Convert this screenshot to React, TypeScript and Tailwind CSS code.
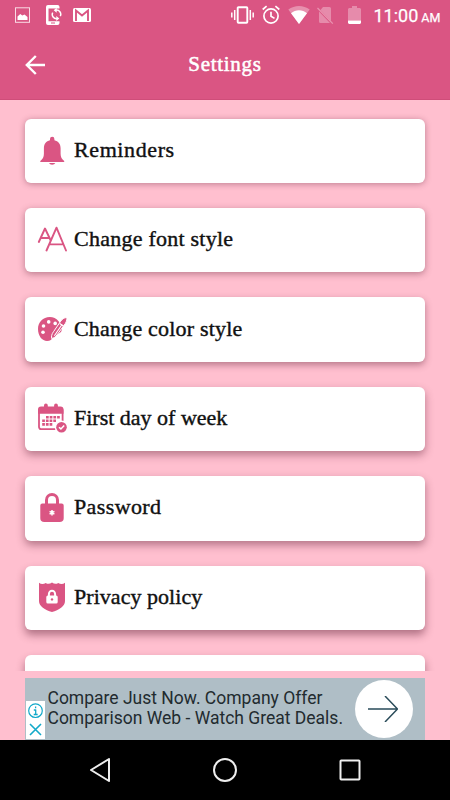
import React from "react";

const PINK = "#da5583";

const BellIcon = () => (
  <svg viewBox="0 0 30 32" className="h-8 w-[30px]" fill={PINK}>
    <path d="M13 4a2.200 2.200 0 0 1 4.400 0v1.300c3.900 1 6.200 3.800 6.200 7.900v5.500c0 3.300 1.200 5.500 3.600 7.300v1H3.300v-1c2.400-1.800 3.600-4 3.600-7.300v-5.500c0-4.100 2.200-6.900 6.100-7.900z" />
    <path d="M12 28h6.300a3.300 2.400 0 0 1-6.300 0z" />
  </svg>
);

const FontIcon = () => (
  <svg viewBox="0 0 30 32" className="h-8 w-[30px]" fill="none" stroke={PINK} strokeWidth="1.900" strokeLinecap="round" strokeLinejoin="round">
    <path d="M1.800 18L8 4.500 13.500 16M4.200 14h8" />
    <path d="M9.500 26.500L19.500 3.700 29 26.500M12.600 20.400h13.700" />
  </svg>
);

const PaletteIcon = () => (
  <svg viewBox="0 0 30 32" className="h-8 w-[30px]">
    <path fill={PINK} d="M12.800 3C6 3 1 8.200 1 15c0 7 4.200 12 9 12 3.400 0 4.800-1.600 5.500-3.200l8.500-5.900c1.900-3 .7-7.200-2-10.100C19.500 4.400 16 3 12.800 3z" />
    <g fill="#fff">
      <circle cx="11.700" cy="7.900" r="1.800" />
      <circle cx="18.200" cy="9.400" r="1.800" />
      <circle cx="6.500" cy="12" r="1.800" />
      <circle cx="6" cy="18.300" r="1.800" />
    </g>
    <path d="M30 3.500c-3 0-5 1.800-6.300 3.700l-7.200 10.500c-2 2.500-2.200 5-1.800 6.800 2-.5 4.200-1.500 5.200-3.500l7-9.500c2-2.500 3-4.500 3.100-8z" fill={PINK} stroke="#fff" strokeWidth="1" />
    <path d="M22.700 9.500l4 2.700M25.200 10.200l-7.800 11.500" stroke="#fff" strokeWidth="1.100" />
  </svg>
);

const CalendarIcon = () => (
  <svg viewBox="0 0 30 32" className="h-8 w-[30px]">
    <rect x="2" y="5.500" width="23.600" height="20.600" rx="2" fill="none" stroke={PINK} strokeWidth="1.800" />
    <path fill={PINK} d="M1 10.800V6.500a3 3 0 0 1 3-3h19.500a3 3 0 0 1 3 3v4.300z" />
    <path d="M8.900 2.500v2M19 2.500v2" stroke={PINK} strokeWidth="3.800" strokeLinecap="round" />
    <path d="M9 14.200h14.500M5.200 17.800h14.500M5.200 21.400h10.500" stroke={PINK} strokeWidth="2.600" strokeDasharray="2.700 1" />
    <circle cx="24.500" cy="24.200" r="6.700" fill="#fff" />
    <circle cx="24.500" cy="24.200" r="5.300" fill={PINK} />
    <path d="M22 24.200l1.900 1.700 3.300-3.500" fill="none" stroke="#fff" strokeWidth="1.500" />
  </svg>
);

const PasswordIcon = () => (
  <svg viewBox="0 0 30 32" className="h-8 w-[30px]">
    <path d="M9.500 12.500V8a5.500 5.500 0 0 1 11 0v4.500" fill="none" stroke={PINK} strokeWidth="3" />
    <path fill={PINK} d="M5.300 11.500h19.400a2 2 0 0 1 2 2v12.700c0 2.500-1.500 3.800-4 3.800H7.300c-2.500 0-4-1.300-4-3.800V13.500a2 2 0 0 1 2-2z" />
    <path d="M15 18v5.600M12.600 19.400l4.800 2.800M17.400 19.400l-4.800 2.800" stroke="#fff" strokeWidth="1.500" />
  </svg>
);

const ShieldIcon = () => (
  <svg viewBox="0 0 30 32" className="h-8 w-[30px]">
    <path fill={PINK} d="M2 .8c2 1.600 4.500 1.700 6.800.1 2 1.400 4.200 1 6.200-.5 2 1.500 4.200 1.900 6.200.5 2.300 1.600 4.800 1.500 6.800-.1V19c0 5.500-6 9-13 11C8 28 2 24.500 2 19z" />
    <path d="M11.900 15v-3a3.100 3.300 0 0 1 6.200 0v3" fill="none" stroke="#fff" strokeWidth="2" />
    <rect x="9.300" y="13.500" width="11.400" height="7.900" rx="1.500" fill="#fff" />
    <circle cx="15" cy="17.400" r="1.200" fill={PINK} />
  </svg>
);

const items = [
  { label: "Reminders", icon: <BellIcon />, spacing: "tracking-[0.6px]", shadow: "shadow-[0_1px_6px_rgba(90,30,50,0.4)]" },
  { label: "Change font style", icon: <FontIcon />, spacing: "tracking-[0.24px]", shadow: "shadow-[0_2px_7px_rgba(90,30,50,0.42)]" },
  { label: "Change color style", icon: <PaletteIcon />, spacing: "tracking-[0.2px]", shadow: "shadow-[0_3px_7px_rgba(90,30,50,0.43)]" },
  { label: "First day of week", icon: <CalendarIcon />, spacing: "tracking-[0px]", shadow: "shadow-[0_4px_8px_rgba(90,30,50,0.44)]" },
  { label: "Password", icon: <PasswordIcon />, spacing: "tracking-[0.38px]", shadow: "shadow-[0_4px_9px_rgba(90,30,50,0.46)]" },
  { label: "Privacy policy", icon: <ShieldIcon />, spacing: "tracking-[0.04px]", shadow: "shadow-[0_5px_9px_rgba(90,30,50,0.48)]" },
];

function StatusBar() {
  return (
    <div className="flex h-[30px] items-start pl-[15px] pt-[5px] text-white">
      <svg width="15" height="20" viewBox="0 0 15 20" className="shrink-0">
        <rect x=".5" y="2.800" width="14" height="14.500" fill="none" stroke="#f9dbe5" />
        <path d="M2.500 15v-3.500L5.300 9l2 1.500 2.200-1 3 2.500v3z" fill="#fff" />
      </svg>
      <svg width="16" height="20" viewBox="0 0 16 20" className="ml-4 shrink-0">
        <path fill="#fff" d="M2 0h9.500a2 2 0 0 1 2 2v1.500H2.500v12.800h11V18a2 2 0 0 1-2 2H2a2 2 0 0 1-2-2V2a2 2 0 0 1 2-2z" />
        <path d="M9.800 5.200a4.200 4.200 0 0 1 4.500 6M11.200 13.600a4.200 4.200 0 0 1-4.500-6" fill="none" stroke="#fff" strokeWidth="1.500" />
        <path d="M10.700 2.700v5l-3-2.500zM10.300 11.100v5l3-2.500z" fill="#fff" />
        <path d="M5 18h4" stroke={PINK} />
      </svg>
      <svg width="18" height="20" viewBox="0 0 18 20" className="ml-[11px] shrink-0">
        <rect y="3" width="18" height="14" rx="1.500" fill="#fff" />
        <path d="M3 16V5.500l6 5 6-5V16" fill="none" stroke={PINK} strokeWidth="1.900" />
      </svg>
      <svg width="23" height="20" viewBox="0 0 23 20" className="ml-[140px] shrink-0" fill="none" stroke="#fff">
        <rect x="6.700" y="2.200" width="9.600" height="15.600" rx=".8" strokeWidth="1.900" />
        <path d="M3.700 5v10M19.300 5v10M.8 7.500v5M22.200 7.500v5" strokeWidth="1.500" />
      </svg>
      <svg width="18" height="20" viewBox="0 0 18 20" className="ml-2 shrink-0" fill="none" stroke="#fff" strokeWidth="1.700">
        <circle cx="9" cy="11" r="7.100" />
        <path d="M9 6.700v4.500l3.500 2.200M.7 4.500l3.900-3.300M17.300 4.500l-3.900-3.300" />
      </svg>
      <svg width="22" height="20" viewBox="0 0 22 20" className="ml-[8px] shrink-0">
        <path d="M11 19L.3 4.600C6.500-.3 15.500-.3 21.700 4.600z" fill="#fff" opacity=".35" />
        <path d="M11 19L3 8.300c4.500-4 11.500-4 16 0z" fill="#fff" />
      </svg>
      <svg width="17" height="20" viewBox="0 0 17 20" className="ml-[7px] shrink-0">
        <path d="M6 2h6.500A1.500 1.500 0 0 1 14 3.500v12.800L3.500 5zM2 6.500L13 18H3.500A1.500 1.500 0 0 1 2 16.500z" fill="#fff" opacity=".32" />
        <path d="M.5 3L15.800 18.700" stroke="#ea94b1" strokeWidth="1.200" />
      </svg>
      <svg width="13" height="20" viewBox="0 0 13 20" className="ml-[14px] shrink-0">
        <path d="M1 3h3V1h5v2h3l1 1v11.500H0V4z" fill="#fff" opacity=".32" />
        <path d="M0 15.500h13V18l-1 1H1l-1-1z" fill="#fff" />
      </svg>
      <span className="ml-[12.500px] mt-px whitespace-nowrap font-['Roboto',sans-serif] text-[18px] leading-5 tracking-[0px] [-webkit-text-stroke:0.25px_white]">
        11:00 <span className="-ml-[1.500px] text-[12.500px] tracking-[0px]">AM</span>
      </span>
    </div>
  );
}

export default function App() {
  return (
    <div className="flex h-[800px] w-[450px] flex-col overflow-hidden bg-[#ffbfcf]">
      <header className="h-[100px] shrink-0 border-b border-[#cf4d79] bg-[#da5583]">
        <StatusBar />
        <div className="grid h-[69px] grid-cols-[1fr_auto_1fr] items-center">
          <svg width="20" height="20" viewBox="0 0 20 20" className="ml-[25px]" fill="none" stroke="#fff" strokeWidth="2.400">
            <path d="M20 10H2M10.800 1L1.800 10l9 9" />
          </svg>
          <h1 className="pb-[2px] font-['Liberation_Serif',serif] text-[21px] leading-7 tracking-[0.7px] text-white [-webkit-text-stroke:0.5px_white]">Settings</h1>
        </div>
      </header>
      <main className="h-[571px] shrink-0 overflow-hidden">
        <div className="flex flex-col gap-[25px] px-[25px] pt-[18.700px]">
          {items.map((item) => (
            <div key={item.label} className={`flex h-[64.400px] shrink-0 items-center rounded-[6px] bg-white pl-3 ${item.shadow}`}>
              {item.icon}
              <span className={`ml-[7px] whitespace-nowrap pb-[2px] font-['Liberation_Serif',serif] text-[22px] leading-7 text-[#111] [-webkit-text-stroke:0.4px_#111] ${item.spacing}`}>{item.label}</span>
            </div>
          ))}
          <div className="h-[64.400px] shrink-0 rounded-[6px] bg-white shadow-[0_5px_9px_rgba(90,30,50,0.48)]" />
        </div>
      </main>
      <aside className="ml-[25px] mt-[6.500px] flex h-[62.500px] w-[400px] shrink-0 bg-[#afbec6]">
        <div className="ml-px mt-[23.500px] flex h-[38px] w-[19px] shrink-0 flex-col items-center bg-white pt-[2px]">
          <svg width="15" height="16" viewBox="0 0 15 16" fill="none" stroke="#12a9c9">
            <circle cx="7.500" cy="7.700" r="6.800" strokeWidth="1.200" />
            <path d="M7.600 3.500v1.700M7.700 6.500v5M5.800 7h2M5.700 11.500h4" strokeWidth="1.300" />
          </svg>
          <svg width="13" height="13" viewBox="0 0 13 13" className="mt-[4px]" stroke="#12a9c9" strokeWidth="1.600">
            <path d="M1 1l11 11M12 1L1 12" />
          </svg>
        </div>
        <p className="ml-[2.500px] mt-[10.500px] w-[306.500px] whitespace-nowrap font-['Roboto',sans-serif] text-[17.500px] leading-5 text-[#222b2f]">
          <span className="block tracking-[0px]">Compare Just Now. Company Offer</span>
          <span className="block tracking-[0px]">Comparison Web - Watch Great Deals.</span>
        </p>
        <div className="ml-[1px] mt-[2px] flex size-[58px] shrink-0 items-center justify-center rounded-full bg-white">
          <svg width="30" height="26" viewBox="0 0 30 26" className="-ml-[3px]" fill="none" stroke="#294b59" strokeWidth="1.500">
            <path d="M0 13h29M17 0l12.500 13L17 26" />
          </svg>
        </div>
      </aside>
      <nav className="flex h-[60px] shrink-0 items-center bg-black pl-[89px]">
        <svg width="22" height="26" viewBox="0 0 22 26" fill="none" stroke="#eee" strokeWidth="2" strokeLinejoin="round">
          <path d="M20 2L2 13l18 11z" />
        </svg>
        <svg width="26" height="26" viewBox="0 0 26 26" className="ml-[101px]" fill="none" stroke="#eee" strokeWidth="2">
          <circle cx="13" cy="13" r="11" />
        </svg>
        <svg width="22" height="22" viewBox="0 0 22 22" className="ml-[101px]" fill="none" stroke="#eee" strokeWidth="2">
          <rect x="1.500" y="1.500" width="19" height="19" rx=".7" />
        </svg>
      </nav>
    </div>
  );
}
